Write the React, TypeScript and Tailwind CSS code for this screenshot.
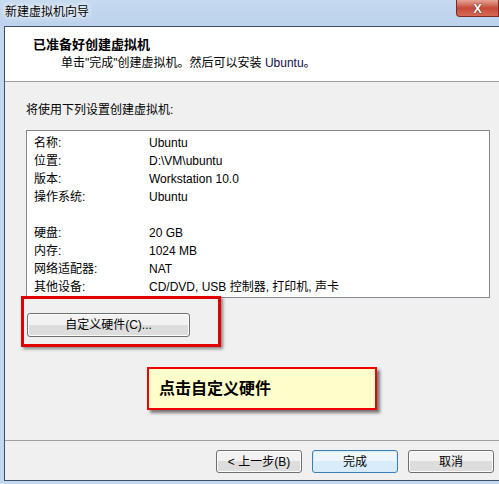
import React from "react";

const rows: [string, string][] = [
    ["名称:", "Ubuntu"],
    ["位置:", "D:\\VM\\ubuntu"],
    ["版本:", "Workstation 10.0"],
    ["操作系统:", "Ubuntu"],
    ["", ""],
    ["硬盘:", "20 GB"],
    ["内存:", "1024 MB"],
    ["网络适配器:", "NAT"],
    ["其他设备:", "CD/DVD, USB 控制器, 打印机, 声卡"],
];

const font = {
    fontFamily: '"Liberation Sans", "Noto Sans CJK SC", sans-serif',
};

const WinButton = ({
    label,
    primary,
    className = "",
}: {
    label: string;
    primary?: boolean;
    className?: string;
}) => (
    <div
        className={`${
            primary
                ? "border-[#3c7fb1] bg-gradient-to-b from-[#eef6fc] from-50% to-[#d9ecf9] to-50% shadow-[inset_0_0_0_1px_#d2ecfb]"
                : "border-[#707070] bg-gradient-to-b from-[#f2f2f2] from-50% to-[#dddddd] to-50% shadow-[inset_0_0_0_1px_#fcfcfc]"
        } flex items-center justify-center rounded-[3px] border text-[12px] text-black ${className}`}
    >
        {label}
    </div>
);

const App = () => {
    return (
        <div
            style={font}
            className="w-[499px] h-[484px] flex flex-col bg-[#c3d8ef] overflow-hidden"
        >
            <div className="h-[26px] flex items-start justify-between bg-gradient-to-b from-[#c6daf0] to-[#bcd2ec]">
                <span className="mt-[4px] ml-[5px] text-[12px] leading-[16px] text-black [text-shadow:0_0_6px_#ffffff,0_0_6px_#ffffff]">
                    新建虚拟机向导
                </span>
                <div className="w-[43px] h-[17px] flex items-center justify-center rounded-bl-[4px] border border-t-0 border-[#7a2a22] bg-gradient-to-b from-[#e3a495] via-[#c6483a] to-[#d76a55]">
                    <span className="text-[13px] font-bold leading-none text-white [text-shadow:0_0_1px_#5a1a12,0_0_1px_#5a1a12]">
                        X
                    </span>
                </div>
            </div>

            <div className="relative flex-1 ml-[4px] mb-[3px] flex flex-col border-l border-t border-b border-[#3d5068] bg-[#f0f0f0]">
                {/* header */}
                <div className="h-[55px] bg-white border-b border-[#a0a0a0] pl-[28px] pt-[10px]">
                    <p className="text-[13px] font-bold leading-[16px] text-black">
                        已准备好创建虚拟机
                    </p>
                    <p className="mt-[2px] pl-[28px] text-[12px] leading-[16px] text-black">
                        单击"完成"创建虚拟机。然后可以安装{" "}
                        <span className="text-[#10104a]">Ubuntu</span>。
                    </p>
                </div>

                {/* body */}
                <div className="flex-1 flex flex-col pl-[21px] pr-[10px] pt-[20px]">
                    <p className="text-[12px] leading-[16px] text-black">
                        将使用下列设置创建虚拟机:
                    </p>
                    <div className="mt-[12px] w-[464px] h-[168px] border border-[#828790] bg-white pl-[7px] pt-[3px]">
                        {rows.map(([k, v], i) => (
                            <div
                                key={i}
                                className="h-[18px] flex items-center text-[12px] text-black"
                            >
                                <span className="w-[115px]">{k}</span>
                                <span>{v}</span>
                            </div>
                        ))}
                    </div>
                    <WinButton
                        label="自定义硬件(C)..."
                        className="mt-[15px] ml-[1px] w-[163px] h-[24px]"
                    />
                </div>

                {/* footer */}
                <div className="h-[40px] border-t border-[#a0a0a0] flex items-start justify-end gap-[10px] pt-[9px] pr-[5px]">
                    <WinButton label="< 上一步(B)" className="w-[86px] h-[23px]" />
                    <WinButton label="完成" primary className="w-[86px] h-[23px]" />
                    <WinButton label="取消" className="w-[86px] h-[23px]" />
                </div>

                {/* annotation: highlight */}
                <div className="absolute left-[16px] top-[269px] w-[200px] h-[51px] border-[3px] border-[#e00000] shadow-[2px_2px_3px_rgba(0,0,0,0.45)]" />

                {/* annotation: callout */}
                <div className="absolute left-[142px] top-[340px] w-[230px] h-[43px] border-[2px] border-[#f00000] bg-[#ffffcc] shadow-[3px_3px_3px_rgba(0,0,0,0.5)] flex items-center pl-[10px]">
                    <span className="text-[16px] font-bold text-black">
                        点击自定义硬件
                    </span>
                </div>
            </div>
        </div>
    );
};

export default App;
